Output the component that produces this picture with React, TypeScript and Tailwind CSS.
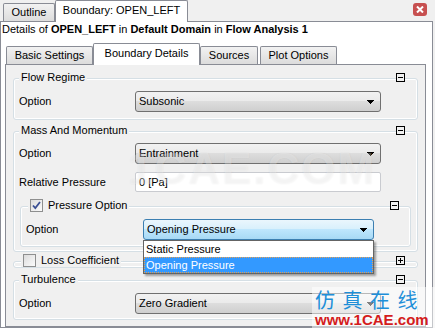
import React from 'react';

// pixel arrow like the classic combo box glyph
const Arrow = () => (
  <svg width="7" height="4" viewBox="0 0 7 4" className="shrink-0">
    <path d="M0 0h7v1H0zM1 1h5v1H1zM2 2h3v1H2zM3 3h1v1H3z" fill="#000" />
  </svg>
);

const Toggle = ({ plus }: { plus?: boolean }) => (
  <div className="flex h-[9px] w-[9px] items-center justify-center border border-black bg-[#f0f0f0]">
    <svg width="7" height="7" viewBox="0 0 7 7">
      <path d={plus ? 'M1 3h5v1H1zM3 1h1v5H3z' : 'M1 3h5v1H1z'} fill="#000" />
    </svg>
  </div>
);

const Check = ({ checked }: { checked?: boolean }) => (
  <div className="flex h-[13px] w-[13px] items-center justify-center border border-[#8e8f8f] bg-[linear-gradient(135deg,#dcdcdc,#fbfbfb)]">
    {checked && (
      <svg width="9" height="9" viewBox="0 0 9 9">
        <path d="M1 4.5l2.3 2.6L8 1" fill="none" stroke="#3a4f93" strokeWidth="1.8" />
      </svg>
    )}
  </div>
);

const Select = ({ value, active, w = 'w-[246px]' }: { value: string; active?: boolean; w?: string }) => (
  <div
    className={`flex h-[21px] ${w} items-center justify-between rounded-[3px] border pl-[3px] pr-[6px] ${
      active
        ? 'border-[#3c7fb1] bg-[linear-gradient(#eaf6fd_0%,#d9f0fc_45%,#bee6fd_50%,#a7d9f5_100%)]'
        : 'border-[#707070] bg-[linear-gradient(#f2f2f2_0%,#ebebeb_45%,#dddddd_50%,#cfcfcf_100%)]'
    }`}
  >
    <span>{value}</span>
    <Arrow />
  </div>
);

const Group = ({
  title,
  check,
  checked,
  plus,
  className = '',
  btnRight = 'right-[12px]',
  children,
}: {
  title: string;
  check?: boolean;
  checked?: boolean;
  plus?: boolean;
  className?: string;
  btnRight?: string;
  children?: React.ReactNode;
}) => (
  <div className={`relative rounded-[3px] border border-[#d5dfe5] shadow-[inset_0_0_0_1px_#ffffff] ${className}`}>
    <div
      className={`absolute -top-[9px] flex h-[14px] items-center bg-[#f0f0f0] px-[2px] leading-[14px] ${
        check ? 'left-[7px]' : 'left-[5px]'
      }`}
    >
      {check && (
        <span className="mr-[5px]">
          <Check checked={checked} />
        </span>
      )}
      <span>{title}</span>
    </div>
    <div className={`absolute -top-[6px] ${btnRight}`}>
      <Toggle plus={plus} />
    </div>
    {children}
  </div>
);

const Row = ({ label, children, lw = 'w-[116px]' }: { label: string; children: React.ReactNode; lw?: string }) => (
  <div className="flex items-center pl-[5px]">
    <span className={`${lw} shrink-0`}>{label}</span>
    {children}
  </div>
);

export default function App() {
  return (
    <div className="relative h-[328px] w-[435px] overflow-hidden bg-[#f0f0f0] font-['Liberation_Sans',Arial,sans-serif] text-[11px] text-black">
      {/* top tabs */}
      <div className="flex h-[21px] items-end">
        <div className="ml-[3px] flex h-[18px] w-[52px] items-center justify-center rounded-t-[2px] border border-b-0 border-[#898c95] bg-[linear-gradient(#f2f2f2,#dcdcdc)]">
          Outline
        </div>
        <div className="relative z-10 -mb-px flex h-[22px] w-[133px] items-center justify-center rounded-t-[2px] border border-b-0 border-[#898c95] bg-white pb-[2px]">
          Boundary: OPEN_LEFT
        </div>
        <div className="mb-[5px] ml-auto mr-[8px] mt-[3px] flex h-[13px] w-[14px] items-center justify-center self-start rounded-[3px] bg-[#c75050]">
          <svg width="8" height="7" viewBox="0 0 8 7">
            <path d="M1 0.5l6 6M7 0.5l-6 6" stroke="#fff" strokeWidth="2" />
          </svg>
        </div>
      </div>

      {/* outer panel */}
      <div className="mr-[2px] border border-[#898c95] bg-white">
        <div className="h-[15px] pl-[1px] leading-[15px]">
          Details of <b>OPEN_LEFT</b> in <b>Default Domain</b> in <b>Flow Analysis 1</b>
        </div>

        {/* inner tabs */}
        <div className="ml-[5px] mt-[6px] flex h-[21px] items-end">
          <div className="flex h-[18px] w-[87px] items-center justify-center rounded-t-[2px] border border-b-0 border-[#898c95] bg-[linear-gradient(#f2f2f2,#dcdcdc)]">
            Basic Settings
          </div>
          <div className="relative z-10 -mb-px flex h-[22px] w-[107px] items-center justify-center rounded-t-[2px] border border-b-0 border-[#898c95] bg-white pb-[2px]">
            Boundary Details
          </div>
          <div className="flex h-[18px] w-[58px] items-center justify-center rounded-t-[2px] border border-b-0 border-[#898c95] bg-[linear-gradient(#f2f2f2,#dcdcdc)]">
            Sources
          </div>
          <div className="ml-[2px] flex h-[18px] w-[77px] items-center justify-center rounded-t-[2px] border border-b-0 border-[#898c95] bg-[linear-gradient(#f2f2f2,#dcdcdc)]">
            Plot Options
          </div>
        </div>

        {/* inner panel */}
        <div className="ml-[4px] mr-[6px] border border-[#898c95] bg-[#f0f0f0] px-[7px] pb-[6px] pt-[13px]">
          <Group title="Flow Regime" className="pb-[7px] pt-[12px]">
            <Row label="Option">
              <Select value="Subsonic" />
            </Row>
          </Group>

          <Group title="Mass And Momentum" className="mt-[11px] pb-[4px] pt-[11px]">
            <Row label="Option">
              <Select value="Entrainment" />
            </Row>
            <div className="mt-[8px]">
              <Row label="Relative Pressure">
                <div className="flex h-[20px] w-[246px] items-center rounded-[2px] border border-[#c9cbd0] bg-white pl-[3px]">
                  0 [Pa]
                </div>
              </Row>
            </div>
            <Group
              title="Pressure Option"
              check
              checked
              btnRight="right-[11px]"
              className="mx-[6px] mt-[14px] pb-[6px] pt-[12px]"
            >
              <Row label="Option" lw="w-[117px]">
                <div className="relative z-20">
                  <Select value="Opening Pressure" active w="w-[231px]" />
                  <div className="absolute left-0 top-full w-[231px] border border-[#646464] bg-white shadow-[2px_2px_2px_rgba(0,0,0,0.35)]">
                    <div className="h-[16px] pl-[2px] leading-[16px]">Static Pressure</div>
                    <div className="h-[16px] border border-dotted border-[#e8a050] bg-[#3399ff] pl-[1px] leading-[14px] text-white">
                      Opening Pressure
                    </div>
                  </div>
                </div>
              </Row>
            </Group>
          </Group>

          <Group title="Loss Coefficient" check plus className="mt-[9px] h-[7px]" />

          <Group title="Turbulence" className="mt-[12px] pb-[5px] pt-[12px]">
            <Row label="Option">
              <Select value="Zero Gradient" />
            </Row>
          </Group>
        </div>
      </div>

      {/* faint watermark over the form */}
      <div className="pointer-events-none absolute left-[128px] top-[136px] text-[44px] font-bold tracking-[2px] text-white/30 [text-shadow:0_0_2px_rgba(0,0,0,0.06)]">
        1CAE.COM
      </div>

      {/* corner watermark */}
      <div className="pointer-events-none absolute left-[312px] top-[287px] flex h-[41px] w-[123px] flex-col items-start bg-white/50 pl-[3px]">
        <div className="h-[25px] font-['Noto_Sans_CJK_SC',sans-serif] text-[20px] leading-[25px] tracking-[7.5px] text-[#1e8fd8]">
          仿真在线
        </div>
        <div className="text-[15px] font-bold leading-[15px] text-[#d41c1c]">www.1CAE.com</div>
      </div>
    </div>
  );
}
